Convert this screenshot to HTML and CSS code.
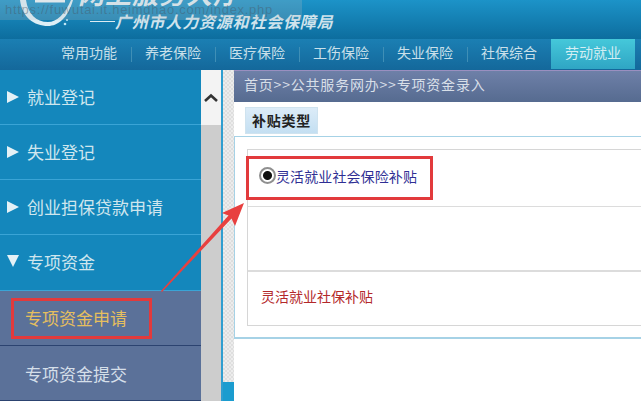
FILE: index.html
```html
<!DOCTYPE html>
<html lang="zh-CN">
<head>
    <meta charset="UTF-8">
    <title>专项资金录入</title>
    <link rel="stylesheet" href="styles.css">
</head>
<body>
    <div class="page">
        <div class="header">
            <svg class="logo" width="76" height="39" viewBox="0 0 76 39">
                <path d="M18 0 C20 17 32 26 46 26 C56 26 66 18 71 0 L69 0 C63 14 55 22 46 22 C34 22 26 14 24 0 Z" fill="#dceef6"/>
                <path d="M33 1 h30" stroke="#e8f3f8" stroke-width="3"/>
                <circle cx="63" cy="24" r="1.3" fill="#bfe6f5"/>
                <circle cx="65" cy="20" r="1" fill="#bfe6f5"/>
            </svg>
            <div class="titles">
                <div class="title-big">网上服务大厅</div>
                <div class="title-sub"><span class="dash"></span>广州市人力资源和社会保障局</div>
            </div>
            <div class="watermark">https://fuwutai.it.heimdhao.com/index.php</div>
        </div>
        <div class="nav">
            <a class="nav-item">常用功能</a>
            <a class="nav-item">养老保险</a>
            <a class="nav-item">医疗保险</a>
            <a class="nav-item">工伤保险</a>
            <a class="nav-item">失业保险</a>
            <a class="nav-item">社保综合</a>
            <a class="nav-item active">劳动就业</a>
        </div>
        <div class="content">
            <div class="sidebar">
                <div class="menu-item"><span class="tri"></span>就业登记</div>
                <div class="menu-item"><span class="tri"></span>失业登记</div>
                <div class="menu-item"><span class="tri"></span>创业担保贷款申请</div>
                <div class="menu-item open"><span class="tri down"></span>专项资金</div>
                <div class="sub-item current"><span class="red-box">专项资金申请</span></div>
                <div class="sub-item">专项资金提交</div>
            </div>
            <div class="scrollbar">
                <div class="scroll-btn">
                    <svg width="16" height="10" viewBox="0 0 16 10"><path d="M2 8 L8 2.5 L14 8" fill="none" stroke="#333" stroke-width="2.6"/></svg>
                </div>
            </div>
            <div class="splitter">
                <div class="split-handle"></div>
            </div>
            <div class="main">
                <div class="crumb">首页&gt;&gt;公共服务网办&gt;&gt;专项资金录入</div>
                <div class="tab">补贴类型</div>
                <div class="panel">
                    <div class="inner">
                        <div class="row-radio">
                            <div class="red-frame">
                                <span class="radio"></span><span class="radio-label">灵活就业社会保险补贴</span>
                            </div>
                        </div>
                        <div class="row-empty"></div>
                        <div class="row-link">灵活就业社保补贴</div>
                    </div>
                </div>
            </div>
            <svg class="arrow" width="90" height="95" viewBox="0 0 90 95">
                <path d="M1 91 L68.5 15.4 L62 13 L84 3 L75 26 L71.5 18.6 L2 92 Z" fill="#e8403f"/>
            </svg>
        </div>
    </div>
</body>
</html>
```

FILE: styles.css
```css
* {
    box-sizing: border-box;
}
body {
    margin: 0;
    font-family: "Noto Sans CJK SC", "Liberation Sans", sans-serif;
    background-color: #fff;
}
.page {
    width: 641px;
    height: 401px;
    overflow: hidden;
}
.header {
    position: relative;
    height: 39px;
    display: flex;
    background: linear-gradient(#1c93c8, #0d6d9e);
    overflow: hidden;
}
.logo {
    flex: none;
    margin-left: 2px;
}
.titles {
    color: #dcebf2;
}
.title-big {
    height: 14px;
    margin-top: -14px;
    font-size: 26px;
    line-height: 14px;
    font-weight: 700;
    font-style: italic;
    letter-spacing: 1px;
    white-space: nowrap;
}
.title-sub {
    display: flex;
    align-items: center;
    margin: 11px 0 0 12px;
    font-size: 16px;
    line-height: 20px;
    font-weight: 700;
    font-style: italic;
    letter-spacing: 0.8px;
    white-space: nowrap;
    color: #cfe3ec;
}
.dash {
    width: 25px;
    height: 1px;
    background-color: #dcebf2;
}
.watermark {
    position: absolute;
    left: 0;
    top: 0;
    width: 302px;
    height: 20px;
    padding-left: 5px;
    font-family: "Liberation Sans", sans-serif;
    font-size: 13px;
    line-height: 20px;
    letter-spacing: 0.7px;
    color: rgba(70, 90, 105, 0.45);
    background-color: rgba(190, 190, 190, 0.22);
    white-space: nowrap;
}
.nav {
    height: 31px;
    display: flex;
    justify-content: flex-end;
    padding-right: 6px;
    background: linear-gradient(#1b7fb3, #14689b);
}
.nav-item {
    position: relative;
    width: 84px;
    font-size: 14px;
    line-height: 27px;
    text-align: center;
    color: #c9e0ea;
}
.nav-item + .nav-item::before {
    content: "";
    position: absolute;
    left: 0;
    top: 8px;
    height: 15px;
    border-left: 1px solid #3f8fb6;
}
.nav-item.active {
    height: 30px;
    color: #d4eef3;
    background: linear-gradient(#45c8da, #2fa5c4);
}
.nav-item.active::before {
    display: none;
}
.content {
    position: relative;
    display: flex;
    height: 331px;
}
.sidebar {
    width: 201px;
    flex: none;
    background-color: #1487bc;
}
.menu-item {
    height: 55px;
    display: flex;
    align-items: center;
    padding: 0 0 1px 7px;
    font-size: 17px;
    color: #cfe6ee;
    border-bottom: 1px solid #3aa4d6;
}
.menu-item.open {
    height: 56px;
    padding-bottom: 3px;
}
.tri {
    width: 0;
    height: 0;
    margin-right: 8px;
    border-left: 12px solid #e4f1f6;
    border-top: 6.5px solid transparent;
    border-bottom: 6.5px solid transparent;
}
.tri.down {
    border-top: 12px solid #e4f1f6;
    border-left: 6px solid transparent;
    border-right: 6px solid transparent;
    border-bottom: 0;
}
.sub-item {
    height: 55px;
    display: flex;
    align-items: center;
    padding-left: 25px;
    font-size: 17px;
    color: #d5dfe9;
    background-color: #5b7199;
    border-bottom: 1px solid #2c4370;
}
.sub-item.current {
    padding-left: 11px;
    color: #e6bf5e;
}
.red-box {
    width: 141px;
    height: 41px;
    line-height: 33px;
    padding-left: 11px;
    border: 3px solid #e23a3c;
}
.scrollbar {
    width: 20px;
    flex: none;
    background-color: #cdcdcd;
}
.scroll-btn {
    height: 55px;
    display: flex;
    align-items: center;
    justify-content: center;
    background-color: #f3f3f3;
}
.splitter {
    width: 13px;
    flex: none;
    display: flex;
    align-items: flex-end;
    border-left: 2px solid #2f9ed0;
    background: repeating-conic-gradient(#dedede 0 25%, #ececec 0 50%) 0 0 / 4px 4px;
}
.split-handle {
    width: 100%;
    height: 19px;
    background-color: #1b9ccf;
}
.main {
    flex: 1;
    background-color: #fff;
}
.crumb {
    height: 32px;
    padding-left: 10px;
    font-size: 14px;
    line-height: 27px;
    letter-spacing: 0.8px;
    color: #d8dfe8;
    background: linear-gradient(#6e80a8, #566b90);
    border-top: 1px solid #9a8fc0;
}
.tab {
    width: 73px;
    height: 27px;
    margin: 5px 0 0 11px;
    font-size: 14px;
    font-weight: 700;
    line-height: 24px;
    text-align: center;
    letter-spacing: 0.8px;
    color: #222;
    background: linear-gradient(#dcecf8, #c4dff2);
    border: 1px solid #cfe3ef;
}
.panel {
    height: 203px;
    margin-top: 2px;
    padding: 12px 0 11px 12px;
    border: 1px solid #a6d2e6;
    border-width: 1px 0 2px 1px;
}
.inner {
    height: 100%;
    display: flex;
    flex-direction: column;
    border: 1px solid #d6d6d6;
    border-right: 0;
}
.row-radio {
    height: 57px;
    flex: none;
    border-bottom: 1px solid #dcdcdc;
}
.red-frame {
    width: 187px;
    height: 44px;
    margin: 6px 0 0 -2px;
    display: flex;
    align-items: center;
    padding: 0 0 4px 10px;
    background-color: #fff;
    border: 3px solid #e23a3c;
}
.radio {
    width: 17px;
    height: 17px;
    flex: none;
    margin-top: -1px;
    border: 2px solid #8f8f8f;
    border-radius: 50%;
    background: radial-gradient(circle, #111 0 4px, #fff 5px);
}
.radio-label {
    font-size: 14px;
    letter-spacing: 0.1px;
    color: #2f2f94;
}
.row-empty {
    height: 65px;
    flex: none;
    border-bottom: 2px solid #dcdcdc;
}
.row-link {
    flex: 1;
    padding-left: 13px;
    font-size: 14px;
    line-height: 48px;
    color: #b3282a;
}
.arrow {
    position: absolute;
    left: 160px;
    top: 130px;
}
```
